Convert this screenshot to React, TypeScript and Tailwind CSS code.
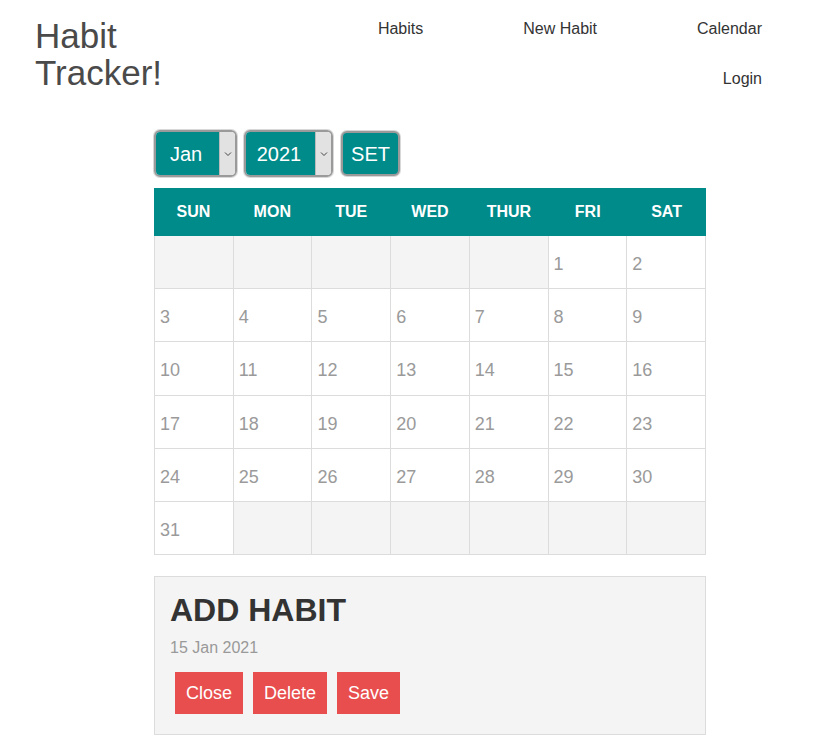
const days = ['SUN', 'MON', 'TUE', 'WED', 'THUR', 'FRI', 'SAT'];

const SelectBox = ({ value, width }: { value: string; width: string }) => (
  <div
    className={`${width} h-[47px] flex rounded-[6px] border-2 border-[#9a9a9a] overflow-hidden shadow-[0_0_0_1px_#d8d8d8]`}
  >
    <div className="flex-1 bg-[#008b8b] text-white text-[20px] flex items-center justify-center pr-[3px]">
      {value}
    </div>
    <div className="w-[16px] bg-[#e2e2e2] border-l border-[#bbb] flex items-center justify-center">
      <svg width="8" height="6" viewBox="0 0 8 6" fill="none">
        <path d="M1 1.5 L4 4.5 L7 1.5" stroke="#444" strokeWidth="1" />
      </svg>
    </div>
  </div>
);

export default function App() {
  // Jan 2021 starts on a Friday
  const cells: (number | null)[] = [null, null, null, null, null];
  for (let d = 1; d <= 31; d++) cells.push(d);
  while (cells.length < 42) cells.push(null);

  return (
    <div className="min-h-screen bg-white font-['Liberation_Sans',Arial,sans-serif]">
      <header className="flex justify-between pl-[35px] pr-[70px] pt-[17px]">
        <h1 className="text-[35px] leading-[37px] text-[#4a4a4a]">
          Habit
          <br />
          Tracker!
        </h1>
        <nav className="flex flex-col items-end pt-[2px] text-[16px] text-[#333]">
          <ul className="flex gap-x-[100px] leading-[20px]">
            <li>Habits</li>
            <li>New Habit</li>
            <li>Calendar</li>
          </ul>
          <ul className="mt-[30px] leading-[20px]">
            <li>Login</li>
          </ul>
        </nav>
      </header>

      <main className="ml-[154px] w-[552px] mt-[39px] pb-[10px]">
        <div className="flex items-center gap-[7px]">
          <SelectBox value="Jan" width="w-[83px]" />
          <SelectBox value="2021" width="w-[89px]" />
          <button className="ml-[1px] h-[45px] w-[59px] rounded-[6px] border-2 border-[#9a9a9a] bg-[#008b8b] text-white text-[20px] shadow-[0_0_0_1px_#d8d8d8]">
            SET
          </button>
        </div>

        <div className="mt-[11px] grid grid-cols-7 h-[48px] bg-[#008b8b] text-white text-[16px] font-bold">
          {days.map((d) => (
            <div key={d} className="flex items-center justify-center">
              {d}
            </div>
          ))}
        </div>

        <div className="grid grid-cols-7 border-l border-[#dcdcdc]">
          {cells.map((c, i) => (
            <div
              key={i}
              className={`h-[53.2px] border-r border-b border-[#dcdcdc] flex items-center pl-[5px] pt-[5px] text-[18px] text-[#9a9a9a] ${
                c === null ? 'bg-[#f4f4f4]' : 'bg-white'
              }`}
            >
              {c}
            </div>
          ))}
        </div>

        <div className="mt-[21px] border border-[#dcdcdc] bg-[#f4f4f4] px-[15px] pt-[15px] pb-[15px]">
          <h2 className="text-[32px] leading-[37px] font-bold text-[#333]">ADD HABIT</h2>
          <p className="mt-[10px] text-[16px] leading-[18px] text-[#999]">15 Jan 2021</p>
          <div className="mt-[10px] flex">
            {['Close', 'Delete', 'Save'].map((b) => (
              <button
                key={b}
                className="m-[5px] h-[42px] px-[11px] bg-[#e84e4e] text-white text-[18px]"
              >
                {b}
              </button>
            ))}
          </div>
        </div>
      </main>
    </div>
  );
}
